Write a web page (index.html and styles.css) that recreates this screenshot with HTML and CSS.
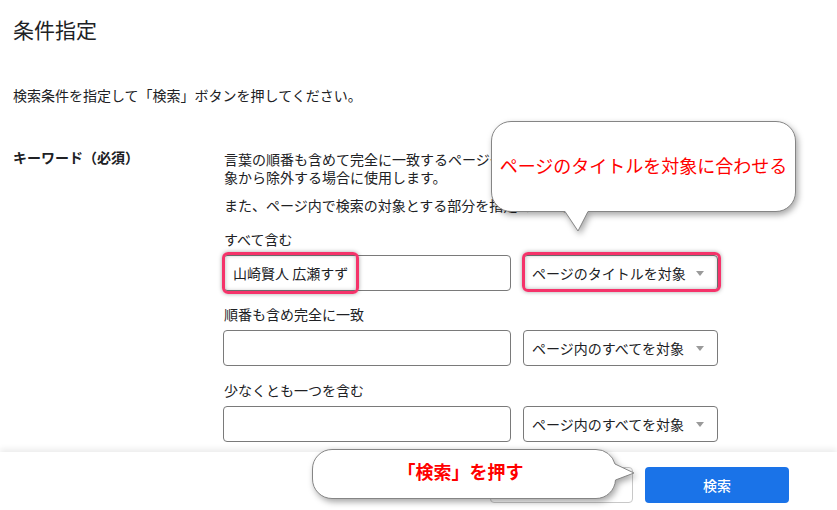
FILE: index.html
```html
<!DOCTYPE html>
<html lang="ja">
<head>
<meta charset="utf-8">
<link rel="stylesheet" href="styles.css">
</head>
<body>
<div class="dialog">
  <div class="content">
    <h1 class="title">条件指定</h1>
    <p class="desc">検索条件を指定して「検索」ボタンを押してください。</p>
    <div class="row">
      <div class="row-label">キーワード（必須）</div>
      <div class="row-body">
        <p class="note note1">言葉の順番も含めて完全に一致するページや、特定の言葉を含むページを検索の対象から除外する場合に使用します。</p>
        <p class="note note2">また、ページ内で検索の対象とする部分を指定できます。</p>

        <div class="field-label first">すべて含む</div>
        <div class="field">
          <div class="input"><span class="hl-input">山崎賢人 広瀬すず</span></div>
          <div class="select hl-select">ページのタイトルを対象<span class="arrow"></span></div>
        </div>

        <div class="field-label">順番も含め完全に一致</div>
        <div class="field">
          <div class="input"></div>
          <div class="select">ページ内のすべてを対象<span class="arrow"></span></div>
        </div>

        <div class="field-label third">少なくとも一つを含む</div>
        <div class="field">
          <div class="input"></div>
          <div class="select">ページ内のすべてを対象<span class="arrow"></span></div>
        </div>
      </div>
    </div>
  </div>
  <div class="footer">
    <button class="btn btn-cancel">キャンセル</button>
    <button class="btn btn-primary">検索</button>
  </div>

  <div class="callout callout-top">
    <svg class="callout-shape" width="330" height="120" viewBox="0 0 330 120">
      <path d="M20,0.5 H285 A19.5,19.5 0 0 1 304.5,20 V71 A19.5,19.5 0 0 1 285,90.5 H97 L87,110 L74,90.5 H20 A19.5,19.5 0 0 1 0.5,71 V20 A19.5,19.5 0 0 1 20,0.5 Z" fill="#fff" stroke="#858585" stroke-width="1"/>
    </svg>
    <span class="callout-text">ページのタイトルを対象に合わせる</span>
  </div>

  <div class="callout callout-bottom">
    <svg class="callout-shape" width="340" height="60" viewBox="0 0 340 60">
      <path d="M20,0.5 H284 A19.5,19.5 0 0 1 303,15 L322,24 L303.5,31 A19.5,19.5 0 0 1 284,49.5 H20 A19.5,19.5 0 0 1 0.5,30 V20 A19.5,19.5 0 0 1 20,0.5 Z" fill="#fff" stroke="#858585" stroke-width="1"/>
    </svg>
    <span class="callout-text">「検索」を押す</span>
  </div>
</div>
</body>
</html>
```

FILE: styles.css
```css
*, *::before, *::after { box-sizing: border-box; }
html, body {
  margin: 0;
  padding: 0;
  background: #fff;
}
body {
  font-family: "Noto Sans CJK JP", "Noto Sans", sans-serif;
  color: #202124;
  font-size: 14px;
}
.dialog {
  position: relative;
  width: 837px;
  height: 510px;
  display: flex;
  flex-direction: column;
  overflow: hidden;
}
.content {
  flex: 1;
  overflow: hidden;
  padding: 0 13px;
}
.title {
  margin: 15px 0 0;
  font-size: 21px;
  font-weight: 400;
  line-height: 28px;
  color: #202124;
}
.desc {
  margin: 42px 0 0;
  line-height: 20px;
  font-size: 14px;
  color: #202124;
}
.row {
  margin-top: 45px;
  display: grid;
  grid-template-columns: 210px 1fr;
}
.row-label {
  font-weight: 700;
  line-height: 18px;
  margin-top: -2px;
}
.row-body {
  min-width: 0;
}
.note {
  margin: 0;
  line-height: 18px;
  padding-left: 1px;
}
.note1 {
  width: 521px;
  word-break: break-all;
}
.note2 {
  margin-top: 10px;
  white-space: nowrap;
}
.field-label {
  margin-top: 14px;
  line-height: 18px;
  white-space: nowrap;
  padding-left: 1px;
}
.field-label.first {
  margin-top: 16px;
}
.field-label.third {
  margin-top: 15px;
}
.field {
  margin-top: 7px;
  display: flex;
  gap: 12px;
  width: 495px;
}
.input {
  position: relative;
  width: 288px;
  height: 36px;
  border: 1px solid #7a7a7a;
  border-radius: 4px;
  flex: none;
  display: flex;
  align-items: center;
  padding-left: 9px;
}
.select {
  position: relative;
  width: 195px;
  height: 36px;
  border: 1px solid #7a7a7a;
  border-radius: 4px;
  flex: none;
  display: flex;
  align-items: center;
  padding-left: 8px;
  white-space: nowrap;
}
.arrow {
  position: absolute;
  right: 13px;
  top: 15px;
  width: 0;
  height: 0;
  border-left: 4px solid transparent;
  border-right: 4px solid transparent;
  border-top: 5px solid #9a9a9a;
}
.hl-input::after {
  content: "";
  position: absolute;
  left: -2px;
  top: -4px;
  width: 137px;
  height: 42px;
  border: 3px solid #f5336a;
  border-radius: 6px;
  box-shadow: 0 0 4px rgba(0,0,0,0.35), inset 0 0 4px rgba(0,0,0,0.3);
}
.hl-select::after {
  content: "";
  position: absolute;
  left: -2px;
  top: -4px;
  width: 199px;
  height: 40px;
  border: 3px solid #f5336a;
  border-radius: 6px;
  box-shadow: 0 0 4px rgba(0,0,0,0.35), inset 0 0 4px rgba(0,0,0,0.3);
}
.footer {
  flex: none;
  height: 58px;
  background: #fff;
  box-shadow: 0 -3px 6px rgba(0,0,0,0.08);
  display: flex;
  justify-content: flex-end;
  align-items: flex-start;
  gap: 12px;
  padding: 15px 48px 0 0;
  position: relative;
  z-index: 1;
}
.btn {
  height: 36px;
  border-radius: 4px;
  font-family: inherit;
  font-size: 14px;
  cursor: pointer;
}
.btn-cancel {
  width: 143px;
  background: #fff;
  border: 1px solid #c8c8c8;
  color: #1a73e8;
}
.btn-primary {
  width: 144px;
  background: #1a73e8;
  border: none;
  color: #fff;
  font-weight: 500;
}
.callout {
  position: absolute;
  z-index: 5;
  display: flex;
  align-items: center;
  justify-content: center;
  color: #ff0000;
  font-size: 18px;
  white-space: nowrap;
}
.callout-shape {
  position: absolute;
  left: 0;
  top: 0;
  filter: drop-shadow(2px 3px 3px rgba(0,0,0,0.35));
  overflow: visible;
}
.callout-text {
  position: relative;
  line-height: 24px;
}
.callout-top {
  left: 491px;
  top: 121px;
  width: 305px;
  height: 91px;
  padding-bottom: 4px;
}
.callout-bottom {
  left: 312px;
  top: 449px;
  width: 304px;
  height: 50px;
  padding: 0 7px 6px 0;
  font-weight: 700;
}
```
